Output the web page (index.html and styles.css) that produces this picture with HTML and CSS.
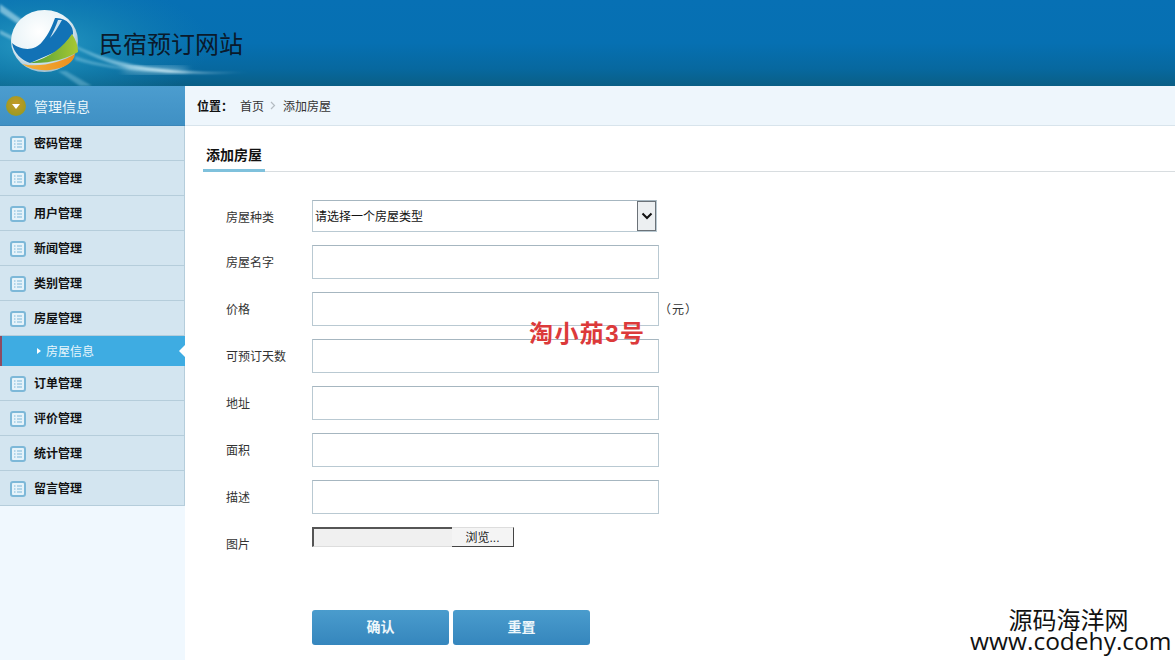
FILE: index.html
```html
<!DOCTYPE html>
<html lang="zh">
<head>
<meta charset="utf-8">
<title>民宿预订网站</title>
<link rel="stylesheet" href="styles.css">
</head>
<body>
<header class="top">
  <svg class="swoosh" width="300" height="86" viewBox="0 0 300 86">
    <defs>
      <linearGradient id="sw" x1="0" x2="1" y1="0" y2="0">
        <stop offset="0" stop-color="#9fdcf0" stop-opacity=".35"/>
        <stop offset=".55" stop-color="#e6f8fd" stop-opacity=".8"/>
        <stop offset="1" stop-color="#d8f2fb" stop-opacity="0"/>
      </linearGradient>
      <radialGradient id="teal" gradientUnits="userSpaceOnUse" cx="40" cy="45" r="170" gradientTransform="translate(0 27) scale(1 .4)">
        <stop offset="0" stop-color="#2a9cc4" stop-opacity=".95"/>
        <stop offset=".5" stop-color="#1a8ab4" stop-opacity=".55"/>
        <stop offset="1" stop-color="#1580b0" stop-opacity="0"/>
      </radialGradient>
      <radialGradient id="glass" cx=".42" cy=".35" r=".62">
        <stop offset="0" stop-color="#fff"/>
        <stop offset=".7" stop-color="#e8f3f7"/>
        <stop offset="1" stop-color="#a4c4d6"/>
      </radialGradient>
      <linearGradient id="gr" x1="0" x2="1" y1="0" y2="0">
        <stop offset="0" stop-color="#4f9e3a"/>
        <stop offset="1" stop-color="#a8c832"/>
      </linearGradient>
      <linearGradient id="or" x1="0" x2="1" y1="0" y2="0">
        <stop offset="0" stop-color="#f2b13a"/>
        <stop offset="1" stop-color="#ec8f1e"/>
      </linearGradient>
      <filter id="bl"><feGaussianBlur stdDeviation="1"/></filter>
      <filter id="bl2"><feGaussianBlur stdDeviation="3"/></filter>
    </defs>
    <rect width="300" height="86" fill="url(#teal)"/>
    <path d="M0 4L28 24L24 28L0 12Z" fill="#c8ecf6" opacity=".55" filter="url(#bl)"/>
    <path d="M0 30L14 37L12 40L0 34Z" fill="#c8ecf6" opacity=".45" filter="url(#bl)"/>
    <path d="M75 45C100 57 130 67.500 183 71C205 72.500 225 72.500 250 72C210 74.500 170 74.500 130 69C105 63 88 54 75 48Z" fill="url(#sw)" filter="url(#bl)"/>
    <path d="M75 56C95 63 120 68 160 71C125 71 98 67 75 60Z" fill="#a8e0f2" opacity=".35" filter="url(#bl)"/>
    <path d="M58 71L66 71L92 86H80Z" fill="#a5dcef" opacity=".35" filter="url(#bl)"/>
    <ellipse cx="155" cy="70" rx="34" ry="4" fill="#d8f4fb" opacity=".4" filter="url(#bl2)"/>
    <ellipse cx="44.500" cy="41" rx="33.500" ry="31" fill="url(#glass)"/>
    <path d="M55 18C66 17 74 26 73 34L60 50L30 63C22 60 14 54 12 43C20 50 34 52 42 42C49 34 52 26 55 18Z" fill="#1272b6"/>
    <path d="M58 20L62 20C58 27 54 34 50 38C53 32 56 26 58 20Z" fill="#cfe4f0"/>
    <path d="M72 34C76 40 78 46 78 52C68 58 50 64 30 63C50 58 64 46 72 34Z" fill="url(#gr)"/>
    <path d="M75 54C74 62 66 68 50 70C40 71 30 69 22 64C40 68 62 62 75 54Z" fill="url(#or)"/>
  </svg>
  <h1 class="brand">民宿预订网站</h1>
</header>
<div class="layout">
  <aside class="side">
    <div class="side-head">
      <span class="badge"><i class="badge-arrow"></i></span>
      <span>管理信息</span>
    </div>
    <ul class="menu">
      <li class="item"><svg class="ico" viewBox="0 0 16 16"><use href="#list"/></svg>密码管理</li>
      <li class="item"><svg class="ico" viewBox="0 0 16 16"><use href="#list"/></svg>卖家管理</li>
      <li class="item"><svg class="ico" viewBox="0 0 16 16"><use href="#list"/></svg>用户管理</li>
      <li class="item"><svg class="ico" viewBox="0 0 16 16"><use href="#list"/></svg>新闻管理</li>
      <li class="item"><svg class="ico" viewBox="0 0 16 16"><use href="#list"/></svg>类别管理</li>
      <li class="item"><svg class="ico" viewBox="0 0 16 16"><use href="#list"/></svg>房屋管理</li>
      <li class="sub"><i class="sub-arrow"></i>房屋信息<i class="sub-notch"></i></li>
      <li class="item"><svg class="ico" viewBox="0 0 16 16"><use href="#list"/></svg>订单管理</li>
      <li class="item"><svg class="ico" viewBox="0 0 16 16"><use href="#list"/></svg>评价管理</li>
      <li class="item"><svg class="ico" viewBox="0 0 16 16"><use href="#list"/></svg>统计管理</li>
      <li class="item"><svg class="ico" viewBox="0 0 16 16"><use href="#list"/></svg>留言管理</li>
    </ul>
  </aside>
  <main class="main">
    <div class="crumb">
      <b class="crumb-label">位置：</b>
      <span>首页</span>
      <svg class="crumb-sep" width="6" height="9" viewBox="0 0 6 9"><path d="M1 1L4.500 4.500L1 8" fill="none" stroke="#b4bcc2" stroke-width="1.200"/></svg>
      <span>添加房屋</span>
    </div>
    <div class="tabs"><span class="tab">添加房屋</span></div>
    <form class="form">
      <div class="row first">
        <label class="lab">房屋种类</label>
        <div class="select"><span class="select-text">请选择一个房屋类型</span><span class="select-btn"><svg width="12" height="8" viewBox="0 0 12 8"><path d="M1.500 1.500L6 6L10.500 1.500" fill="none" stroke="#111" stroke-width="2"/></svg></span></div>
      </div>
      <div class="row"><label class="lab">房屋名字</label><input class="field" type="text"></div>
      <div class="row"><label class="lab">价格</label><input class="field" type="text"><span class="unit">（元）</span></div>
      <div class="row"><label class="lab">可预订天数</label><input class="field" type="text"></div>
      <div class="row"><label class="lab">地址</label><input class="field" type="text"></div>
      <div class="row"><label class="lab">面积</label><input class="field" type="text"></div>
      <div class="row"><label class="lab">描述</label><input class="field" type="text"></div>
      <div class="row file-row">
        <label class="lab">图片</label>
        <div class="file"><span class="file-box"></span><span class="file-btn">浏览...</span></div>
      </div>
      <div class="actions">
        <button class="btn" type="button">确认</button>
        <button class="btn" type="button">重置</button>
      </div>
    </form>
  </main>
</div>
<div class="stamp">淘小茄3号</div>
<div class="mark"><div class="mark-name">源码海洋网</div><div class="mark-url">www.codehy.com</div></div>
<svg class="defs" width="0" height="0">
  <symbol id="list" viewBox="0 0 16 16">
    <rect x="1" y="1" width="14" height="14" rx="2" fill="#e6f3fa" stroke="#7db8d8" stroke-width="2"/>
    <path d="M4 5H5.500M7 5H12M4 8H5.500M7 8H12M4 11H5.500M7 11H12" stroke="#7db8d8" stroke-width="1.200"/>
  </symbol>
</svg>
</body>
</html>
```
FILE: styles.css
```css
* { box-sizing: border-box; }
html, body { margin: 0; padding: 0; height: 660px; overflow: hidden; }
body {
  position: relative;
  font-family: "Liberation Sans", "Noto Sans CJK SC", sans-serif;
  font-size: 12px;
  color: #222;
  background: #fff;
}
.top {
  height: 86px;
  background: linear-gradient(180deg, #0770b4 0%, #0670b2 50%, #07689f 80%, #0a5f85 100%);
  position: relative;
  display: flex;
  align-items: center;
  padding-left: 99px;
}
.swoosh { position: absolute; left: 0; top: 0; }
.brand {
  position: relative;
  margin: 0;
  padding-top: 3px;
  font-size: 24px;
  line-height: 83px;
  font-weight: 400;
  color: #0a1a2c;
}
.layout { display: flex; height: 574px; }
.side { width: 185px; flex: none; background: #f0f8fe; }
.side-head {
  height: 40px;
  display: flex;
  align-items: center;
  gap: 8px;
  padding-left: 6px;
  color: #eaf6fb;
  font-size: 14px;
  background: linear-gradient(180deg, #4c9dcf, #3f90c4);
  border-bottom: 1px solid #3a86b8;
}
.badge {
  width: 20px;
  height: 20px;
  border-radius: 50%;
  background: radial-gradient(circle at 50% 40%, #c69a28, #8d9a1e);
  display: flex;
  align-items: center;
  justify-content: center;
}
.badge-arrow {
  width: 0;
  height: 0;
  border-left: 4px solid transparent;
  border-right: 4px solid transparent;
  border-top: 5px solid #fff;
  margin-top: 2px;
}
.menu { list-style: none; margin: 0; padding: 0; }
.item {
  height: 35px;
  display: flex;
  align-items: center;
  gap: 8px;
  padding-left: 10px;
  padding-bottom: 1px;
  font-weight: 700;
  color: #111;
  background: #d3e5f0;
  border-bottom: 1px solid #b5cddb;
  border-right: 1px solid #b5cddb;
}
.ico { width: 16px; height: 16px; flex: none; margin-top: 2px; }
.sub {
  height: 30px;
  position: relative;
  display: flex;
  align-items: center;
  padding-left: 35px;
  padding-bottom: 1px;
  color: #e8f6fc;
  background: #3eace2;
  border-left: 2px solid #8d4b62;
}
.sub-arrow {
  width: 0;
  height: 0;
  border-top: 3.500px solid transparent;
  border-bottom: 3.500px solid transparent;
  border-left: 4px solid #fff;
  margin-right: 5px;
}
.sub-notch {
  position: absolute;
  right: 0;
  top: 9px;
  width: 0;
  height: 0;
  border-top: 6px solid transparent;
  border-bottom: 6px solid transparent;
  border-right: 6px solid #fff;
}
.main { flex: 1; min-width: 0; }
.crumb {
  height: 40px;
  display: flex;
  align-items: center;
  padding-left: 12px;
  color: #333;
  background: #eef6fc;
  border-bottom: 1px solid #d8e4ec;
}
.crumb-label { color: #111; margin-right: 7px; }
.crumb-sep { margin: 0 7px 0 6px; }
.tabs {
  height: 46px;
  margin-left: 18px;
  padding-top: 19px;
  border-bottom: 1px solid #d8dde0;
}
.tab {
  display: block;
  width: 62px;
  height: 27px;
  padding-left: 3px;
  font-size: 14px;
  font-weight: 700;
  line-height: 20px;
  color: #111;
  border-bottom: 3px solid #7fc1dc;
}
.form { padding: 0 0 0 41px; }
.row {
  display: flex;
  align-items: flex-start;
  margin-bottom: 13px;
}
.row.first { margin-top: 28px; margin-bottom: 11px; }
.lab {
  width: 86px;
  height: 34px;
  flex: none;
  line-height: 36px;
  color: #333;
}
.field {
  display: block;
  width: 347px;
  height: 34px;
  margin: 0;
  padding: 0 4px;
  border: 1px solid #b9c9d2;
  border-top-color: #a6b6c0;
  background: #fff;
}
.unit { height: 34px; line-height: 36px; color: #333; letter-spacing: 1px; }
.select {
  width: 345px;
  height: 32px;
  display: flex;
  align-items: center;
  justify-content: space-between;
  padding: 0 0 0 2px;
  border: 1px solid #b9c9d2;
  border-top-color: #a6b6c0;
  color: #111;
}
.select-text { line-height: 32px; padding-top: 1px; }
.select-btn {
  width: 19px;
  height: 30px;
  display: flex;
  align-items: center;
  justify-content: center;
  background: #eceff1;
  border: 1px solid #6b7278;
}
.file-row { height: 20px; margin-bottom: 63px; }
.file { display: flex; height: 20px; }
.file-box {
  width: 140px;
  height: 20px;
  background: #f0f0f0;
  border-top: 2px solid #555;
  border-left: 2px solid #555;
  border-bottom: 1px solid #ddd;
}
.file-btn {
  width: 62px;
  height: 20px;
  text-align: center;
  line-height: 20px;
  color: #222;
  background: #f4f4f4;
  border-right: 1px solid #444;
  border-bottom: 1px solid #444;
  border-top: 1px solid #ddd;
}
.actions { display: flex; gap: 4px; padding-left: 86px; }
.btn {
  width: 137px;
  height: 35px;
  padding: 0 0 3px;
  border: 0;
  border-radius: 3px;
  font-family: inherit;
  font-size: 14px;
  font-weight: 700;
  color: #eef7fb;
  background: linear-gradient(180deg, #4a9ccd, #3586bd);
}
.stamp {
  position: absolute;
  left: 529px;
  top: 319px;
  font-size: 24px;
  letter-spacing: 1.400px;
  line-height: 30px;
  font-weight: 700;
  color: #dc3a3a;
}
.mark {
  position: absolute;
  left: 970px;
  top: 607px;
  width: 201px;
  text-align: center;
  color: #111;
}
.mark-name {
  font-family: "Noto Sans CJK SC", sans-serif;
  font-size: 24px;
  line-height: 24px;
  padding-right: 4px;
}
.mark-url {
  font-family: "Open Sans", "Liberation Sans", sans-serif;
  font-size: 24.500px;
  line-height: 20px;
  white-space: nowrap;
}
.defs { position: absolute; }
```
